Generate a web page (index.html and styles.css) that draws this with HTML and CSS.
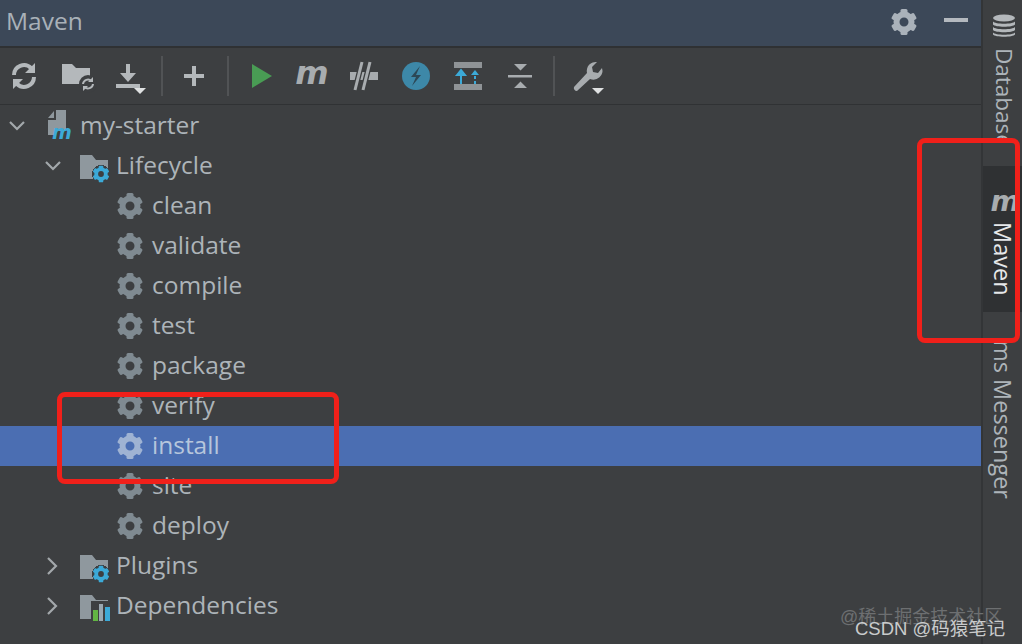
FILE: index.html
```html
<!DOCTYPE html>
<html lang="en">
<head>
  <meta charset="UTF-8" />
  <meta name="viewport" content="width=device-width, initial-scale=1.0" />
  <title>Maven</title>
  <link rel="stylesheet" href="styles.css">
</head>
<body>
  <svg class="defs" width="0" height="0">
    <symbol id="gear" viewBox="0 0 28 28">
      <circle cx="14" cy="14" r="7.5" fill="none" stroke="currentColor" stroke-width="6"/>
      <g fill="currentColor">
        <rect x="10.5" y="1" width="7" height="6" rx="1.5"/>
        <rect x="10.5" y="1" width="7" height="6" rx="1.5" transform="rotate(60 14 14)"/>
        <rect x="10.5" y="1" width="7" height="6" rx="1.5" transform="rotate(120 14 14)"/>
        <rect x="10.5" y="1" width="7" height="6" rx="1.5" transform="rotate(180 14 14)"/>
        <rect x="10.5" y="1" width="7" height="6" rx="1.5" transform="rotate(240 14 14)"/>
        <rect x="10.5" y="1" width="7" height="6" rx="1.5" transform="rotate(300 14 14)"/>
      </g>
    </symbol>
    <symbol id="folder" viewBox="0 0 28 24">
      <path d="M0 0h12l4 5h12v19H0z" fill="#8f989e"/>
    </symbol>
    <symbol id="chev-down" viewBox="0 0 18 18">
      <path d="M2 5l7 7 7-7" fill="none" stroke="#a3a8ab" stroke-width="2.2"/>
    </symbol>
    <symbol id="chev-right" viewBox="0 0 18 18">
      <path d="M4 1l8 8-8 8" fill="none" stroke="#a3a8ab" stroke-width="2.2"/>
    </symbol>
  </svg>

  <div class="app">
    <div class="panel">
      <header class="title-bar">
        <span class="title">Maven</span>
        <svg class="title-gear"><use href="#gear"/></svg>
        <span class="minimize"></span>
      </header>

      <div class="toolbar">
        <!-- reload -->
        <svg class="tool" viewBox="0 0 48 56">
          <path d="M14 27a10 10 0 0 1 17-7" fill="none" stroke="#b4b8bb" stroke-width="4"/>
          <path d="M34 29a10 10 0 0 1-17 7" fill="none" stroke="#b4b8bb" stroke-width="4"/>
          <path d="M35 15v10h-10zM13 41V31h10z" fill="#b4b8bb"/>
        </svg>
        <!-- folder + reload -->
        <svg class="tool" viewBox="0 0 48 56">
          <path d="M10 16h10l4 4h14v16H10z" fill="#b4b8bb"/>
          <circle cx="36" cy="36" r="9" fill="#3d3f41"/>
          <path d="M31 36a5 5 0 0 1 8.500-3M41 36a5 5 0 0 1-8.500 3" fill="none" stroke="#b4b8bb" stroke-width="2"/>
          <path d="M41 29v5h-5zM31 43v-5h5z" fill="#b4b8bb"/>
        </svg>
        <!-- download -->
        <svg class="tool shift" viewBox="0 0 48 56">
          <path d="M20 16h4v9h6l-8 9-8-9h6z" fill="#b4b8bb"/>
          <rect x="10" y="36" width="24" height="4" fill="#b4b8bb"/>
          <path d="M28 40h12l-6 6z" fill="#dfe1e2"/>
        </svg>
        <span class="sep"></span>
        <!-- add -->
        <svg class="tool" viewBox="0 0 48 56">
          <path d="M22 18h4v8h8v4h-8v8h-4v-8h-8v-4h8z" fill="#b4b8bb"/>
        </svg>
        <span class="sep"></span>
        <!-- run -->
        <svg class="tool shift" viewBox="0 0 48 56">
          <path d="M14 16l20 12-20 12z" fill="#499c54"/>
        </svg>
        <span class="tool m-logo">m</span>
        <!-- skip tests -->
        <svg class="tool" viewBox="0 0 48 56">
          <rect x="10" y="24" width="28" height="8" fill="#a8acaf"/>
          <path d="M22 14l-7 28M30 14l-7 28" stroke="#3d3f41" stroke-width="5.500"/>
          <path d="M22 14l-7 28M30 14l-7 28" stroke="#a8acaf" stroke-width="3"/>
        </svg>
        <!-- offline mode -->
        <svg class="tool" viewBox="0 0 48 56">
          <circle cx="24" cy="28" r="14" fill="#3d88a8"/>
          <path d="M28 18l-9 11h5l-4 9 9-11h-5z" fill="#2c4856"/>
        </svg>
        <!-- show updates -->
        <svg class="tool" viewBox="0 0 48 56">
          <rect x="10" y="14" width="28" height="6" fill="#8f9396"/>
          <rect x="10" y="36" width="28" height="6" fill="#8f9396"/>
          <path d="M17 36V25M13 27l4-5 4 5z" stroke="#3caad8" stroke-width="2" fill="#3caad8"/>
          <path d="M31 36V26" stroke="#3caad8" stroke-width="2" stroke-dasharray="3 2"/>
          <path d="M27 27l4-5 4 5z" fill="#3caad8"/>
        </svg>
        <!-- collapse all -->
        <svg class="tool" viewBox="0 0 48 56">
          <rect x="12" y="27" width="24" height="2.500" fill="#a8acaf"/>
          <path d="M18 16h13l-6.500 6.500zM18 40h13l-6.500-6.500z" fill="#a8acaf"/>
        </svg>
        <span class="sep"></span>
        <!-- settings -->
        <svg class="tool" viewBox="0 0 48 56">
          <path d="M12 39l13-14a9 9 0 0 1 10-11l-5 5 1 5 5 1 4-5a9 9 0 0 1-12 11L15 43a3 3 0 0 1-3-4z" fill="#a8acaf"/>
          <path d="M30 40h12l-6 6z" fill="#dfe1e2"/>
        </svg>
      </div>

      <div class="tree">
        <div class="row lvl0">
          <svg class="arrow"><use href="#chev-down"/></svg>
          <span class="node-icon">
            <svg class="root-icon" viewBox="0 0 32 32">
              <path d="M2 8l6-7v7zM10 0h10v21H10v4H2V10h8z" fill="#8f989e"/>
              <text x="6" y="29" class="root-m">m</text>
            </svg>
          </span>
          <span class="label">my-starter</span>
        </div>
        <div class="row lvl1">
          <svg class="arrow"><use href="#chev-down"/></svg>
          <span class="node-icon">
            <svg class="folder"><use href="#folder"/></svg>
            <svg class="folder-gear"><use href="#gear"/></svg>
          </span>
          <span class="label">Lifecycle</span>
        </div>
        <div class="row lvl2"><svg class="goal"><use href="#gear"/></svg><span class="label">clean</span></div>
        <div class="row lvl2"><svg class="goal"><use href="#gear"/></svg><span class="label">validate</span></div>
        <div class="row lvl2"><svg class="goal"><use href="#gear"/></svg><span class="label">compile</span></div>
        <div class="row lvl2"><svg class="goal"><use href="#gear"/></svg><span class="label">test</span></div>
        <div class="row lvl2"><svg class="goal"><use href="#gear"/></svg><span class="label">package</span></div>
        <div class="row lvl2"><svg class="goal"><use href="#gear"/></svg><span class="label">verify</span></div>
        <div class="row lvl2 selected"><svg class="goal"><use href="#gear"/></svg><span class="label">install</span></div>
        <div class="row lvl2"><svg class="goal"><use href="#gear"/></svg><span class="label">site</span></div>
        <div class="row lvl2"><svg class="goal"><use href="#gear"/></svg><span class="label">deploy</span></div>
        <div class="row lvl1">
          <svg class="arrow"><use href="#chev-right"/></svg>
          <span class="node-icon">
            <svg class="folder"><use href="#folder"/></svg>
            <svg class="folder-gear"><use href="#gear"/></svg>
          </span>
          <span class="label">Plugins</span>
        </div>
        <div class="row lvl1">
          <svg class="arrow"><use href="#chev-right"/></svg>
          <span class="node-icon">
            <svg class="folder"><use href="#folder"/></svg>
            <svg class="bars" viewBox="0 0 20 20">
              <path d="M0 0h20v20H0z" fill="#3d3f41"/>
              <rect x="2" y="9" width="5" height="11" fill="#62b543"/>
              <rect x="8" y="3" width="4" height="17" fill="#9aa7b0"/>
              <rect x="14" y="6" width="5" height="14" fill="#3caad8"/>
            </svg>
          </span>
          <span class="label">Dependencies</span>
        </div>
      </div>
    </div>

    <aside class="stripe">
      <div class="stripe-tab db-tab">
        <svg class="db-icon" viewBox="0 0 24 24">
          <ellipse cx="12" cy="4" rx="11" ry="3.500" fill="#b4b8bb"/>
          <path d="M1 7.500c2 3 20 3 22 0v3c-2 3-20 3-22 0zM1 13c2 3 20 3 22 0v3c-2 3-20 3-22 0zM1 18.500c2 3 20 3 22 0v2c-2 3-20 3-22 0z" fill="#b4b8bb"/>
        </svg>
        <span class="stripe-text">Database</span>
      </div>
      <div class="stripe-tab maven-tab">
        <span class="stripe-m">m</span>
        <span class="stripe-text">Maven</span>
      </div>
      <div class="stripe-tab jms-tab">
        <span class="stripe-text">ms Messenger</span>
      </div>
    </aside>
  </div>

  <div class="mark mark-install"></div>
  <div class="mark mark-maven"></div>
  <div class="watermark wm-top">@稀土掘金技术社区</div>
  <div class="watermark wm-bottom">CSDN @码猿笔记</div>
</body>
</html>
```

FILE: styles.css
```css
body {
  margin: 0;
  width: 1022px;
  height: 644px;
  overflow: hidden;
  position: relative;
  background-color: #3d3f41;
  color: #adb4b9;
  font-family: "Open Sans", "Noto Sans", sans-serif;
}
.defs {
  position: absolute;
}
.app {
  display: flex;
  height: 644px;
}
.panel {
  flex: 1;
  display: flex;
  flex-direction: column;
  border-right: 2px solid #333537;
}
.title-bar {
  height: 46px;
  display: flex;
  align-items: center;
  padding-left: 6px;
  background-color: #3c4858;
  border-bottom: 2px solid #2f3133;
}
.title {
  flex: 1;
  font-size: 24.5px;
  line-height: 42px;
  margin-bottom: 4px;
  color: #a9b1b8;
}
.title-gear {
  width: 28px;
  height: 28px;
  margin-bottom: 2px;
  color: #aab2ba;
}
.minimize {
  width: 24px;
  height: 4px;
  margin: 0 13px 6px 26px;
  background-color: #b4b9bf;
}
.toolbar {
  height: 56px;
  display: flex;
  align-items: center;
  gap: 4px;
  border-bottom: 1px solid #303234;
}
.tool {
  width: 48px;
  height: 56px;
  flex: none;
}
.shift {
  transform: translateX(2px);
}
.sep {
  width: 2px;
  height: 40px;
  margin: 0 3px 0 5px;
  background-color: #515355;
}
.m-logo {
  font-family: "DejaVu Sans", sans-serif;
  font-weight: bold;
  font-style: italic;
  font-size: 32px;
  line-height: 50px;
  text-align: center;
  color: #a8acaf;
}
.tree {
  flex: 1;
  padding-top: 1px;
}
.row {
  height: 40px;
  display: flex;
  align-items: center;
  font-size: 24.5px;
}
.lvl1 {
  padding-left: 36px;
}
.lvl2 {
  padding-left: 116px;
}
.arrow {
  width: 18px;
  height: 18px;
  margin: 0 18px 0 8px;
  flex: none;
}
.node-icon {
  position: relative;
  width: 36px;
  height: 40px;
  flex: none;
}
.label {
  line-height: 38px;
  padding-bottom: 2px;
}
.goal {
  width: 28px;
  height: 28px;
  margin-right: 8px;
  color: #7f8a91;
  flex: none;
}
.selected {
  background-color: #4b6eb2;
  color: #b6c6dc;
}
.selected .goal {
  color: #9fb3d3;
}
.root-icon {
  position: absolute;
  left: 2px;
  top: 4px;
  width: 32px;
  height: 32px;
  overflow: visible;
}
.root-m {
  font-family: "DejaVu Sans", sans-serif;
  font-weight: bold;
  font-style: italic;
  font-size: 19px;
  fill: #3caad8;
}
.folder {
  position: absolute;
  left: 0;
  top: 9px;
  width: 28px;
  height: 24px;
}
.folder-gear {
  position: absolute;
  left: 12px;
  top: 19px;
  width: 18px;
  height: 18px;
  color: #3caad8;
  background: radial-gradient(circle, #3d3f41 70%, transparent 72%);
}
.bars {
  position: absolute;
  left: 11px;
  top: 15px;
  width: 20px;
  height: 20px;
}
.stripe {
  width: 39px;
  flex: none;
  display: flex;
  flex-direction: column;
}
.stripe-tab {
  display: flex;
  flex-direction: column;
  align-items: center;
  overflow: hidden;
  font-size: 23.5px;
  color: #adb4b9;
}
.stripe-text {
  writing-mode: vertical-rl;
  white-space: nowrap;
  line-height: 24px;
  padding-left: 1px;
  flex: none;
}
.db-tab {
  height: 143px;
  margin-bottom: 23px;
  padding: 14px 0 0 2px;
  box-sizing: border-box;
  font-size: 22.5px;
}
.db-icon {
  width: 24px;
  height: 24px;
  margin-bottom: 10px;
  flex: none;
}
.maven-tab {
  height: 146px;
  padding-top: 20px;
  box-sizing: border-box;
  background-color: #2f3133;
  color: #e6e8ea;
}
.stripe-m {
  font-family: "DejaVu Sans", sans-serif;
  font-weight: bold;
  font-style: italic;
  font-size: 28px;
  line-height: 32px;
  color: #a8acaf;
  margin: 0 0 4px 5px;
}
.jms-tab {
  padding-top: 28px;
}
.mark {
  position: absolute;
  box-sizing: border-box;
  border: 5px solid #f0201a;
  border-radius: 8px;
}
.mark-install {
  left: 57px;
  top: 392px;
  width: 282px;
  height: 92px;
}
.mark-maven {
  left: 917px;
  top: 138px;
  width: 103px;
  height: 205px;
}
.watermark {
  position: absolute;
  white-space: nowrap;
  font-family: "Liberation Sans", "Noto Sans CJK SC", sans-serif;
}
.wm-top {
  left: 840px;
  top: 602px;
  font-size: 18px;
  color: #6d6f71;
}
.wm-bottom {
  left: 855px;
  top: 614px;
  font-size: 18.5px;
  color: #c9cbcc;
}
```
